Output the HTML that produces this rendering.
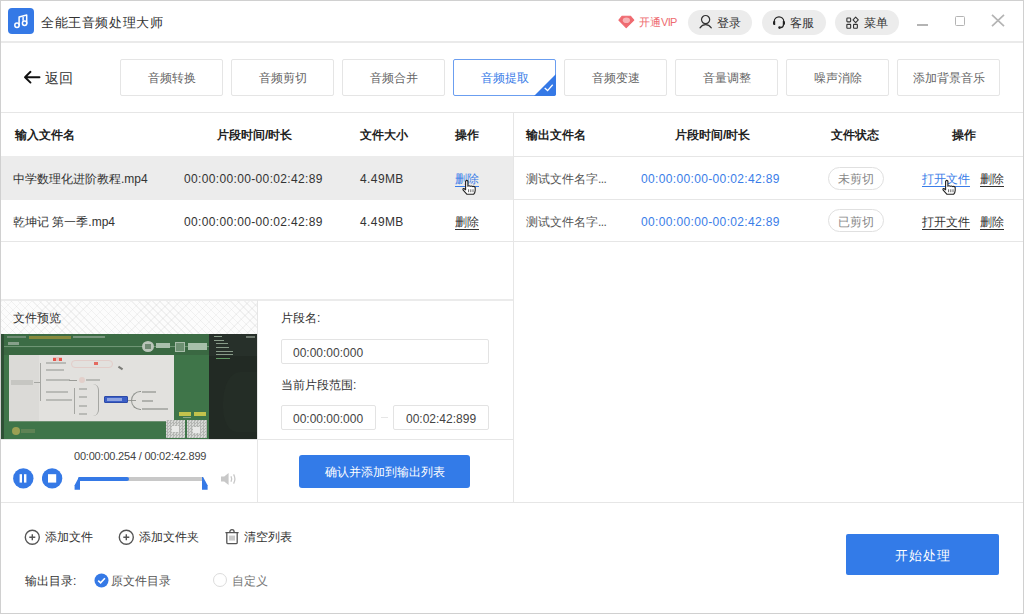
<!DOCTYPE html>
<html><head><meta charset="utf-8">
<style>
*{margin:0;padding:0;box-sizing:border-box}
html,body{width:1024px;height:614px;overflow:hidden;background:#fff}
body{font-family:"Liberation Sans",sans-serif;color:#333;font-size:12px;position:relative}
.a{position:absolute}
.win{left:0;top:0;width:1024px;height:614px;border:1px solid #d0d0d0}
.hl{height:1px;background:#e6e6e6}
.vl{width:1px;background:#e6e6e6}
.t{position:absolute;white-space:nowrap;line-height:1}
.pill{position:absolute;top:10px;height:25px;border-radius:13px;background:#ececec}
.tab{position:absolute;top:59px;width:103px;height:37px;border:1px solid #e5e5e5;border-radius:2px;color:#666;font-size:12px;text-align:center;line-height:36px}
.th{font-weight:bold;color:#222;font-size:12px}
.u{text-decoration:underline;text-underline-offset:3px}
.inp{position:absolute;height:25px;border:1px solid #e3e3e3;border-radius:2px;color:#444;font-size:12px;line-height:26px}
.dg{letter-spacing:0.35px}
</style></head><body>
<div class="a win"></div>

<!-- Title bar -->
<div class="a" style="left:8px;top:8px;width:26px;height:26px;border-radius:4px;background:#3579e6"></div>
<svg class="a" style="left:8px;top:8px" width="26" height="26" viewBox="0 0 26 26" fill="none" stroke="#fff" stroke-width="1.5" stroke-linecap="round" stroke-linejoin="round">
<circle cx="9" cy="17.3" r="2.2"/><circle cx="16.6" cy="15.3" r="2.2"/>
<path d="M11.1 17V8.9L18.7 7V15.2"/><path d="M15.1 9.6V12.3"/></svg>
<div class="t" style="left:41px;top:16px;font-size:13px;letter-spacing:0.6px;color:#333">全能王音频处理大师</div>
<div class="a" style="left:1px;top:41px;width:1022px;height:2px;background:#eaeaea"></div>

<svg class="a" style="left:618px;top:14px" width="17" height="15" viewBox="0 0 17 15">
<path d="M4.2 2.2H12.4L15.8 6L8.2 13.6L0.9 6Z" fill="#ef6a70" stroke="#ef6a70" stroke-width="1.1" stroke-linejoin="round"/>
<ellipse cx="8.4" cy="6.2" rx="3.6" ry="2.8" fill="#f7b3b6"/></svg>
<div class="t" style="left:639px;top:17px;font-size:11px;color:#ee6b70">开通<span style="letter-spacing:-0.7px">VIP</span></div>
<div class="pill" style="left:688px;width:64px"></div>
<svg class="a" style="left:699px;top:13px" width="14" height="16" viewBox="0 0 14 16" fill="none" stroke="#333" stroke-width="1.2">
<circle cx="6.6" cy="6.6" r="4.1"/><path d="M1 14.8C2.5 12.6 4.4 11.6 6.6 11.6C8.8 11.6 10.7 12.6 12.3 14.8" stroke-linecap="round"/></svg>
<div class="t" style="left:717px;top:17px;font-size:12px;color:#333">登录</div>
<div class="pill" style="left:762px;width:64px"></div>
<svg class="a" style="left:772px;top:14px" width="14" height="16" viewBox="0 0 14 16" fill="none" stroke="#222" stroke-width="1.15">
<path d="M2.2 9V7.6A4.8 4.8 0 0 1 11.8 7.6V9"/><path d="M1 8.2Q1 7 2.4 7H3.2V11H2.4Q1 11 1 9.8Z" fill="#222" stroke="none"/>
<path d="M13 8.2Q13 7 11.6 7H10.8V11H11.6Q13 11 13 9.8Z" fill="#222" stroke="none"/>
<path d="M11.6 10.6Q11.4 13.2 8.6 13.6"/><circle cx="7.6" cy="13.6" r="1.35" fill="#222" stroke="none"/></svg>
<div class="t" style="left:790px;top:17px;font-size:12px;color:#333">客服</div>
<div class="pill" style="left:835px;width:64px"></div>
<svg class="a" style="left:845px;top:16px" width="15" height="14" viewBox="0 0 15 14" fill="none" stroke="#333" stroke-width="1.1">
<rect x="1.85" y="1.95" width="3.8" height="3.9" rx="0.8"/><path d="M10.65 1.2L13.3 3.9L10.65 6.6L8 3.9Z" stroke-linejoin="round"/>
<rect x="1.85" y="8.35" width="3.8" height="3.9" rx="0.5"/><rect x="8.55" y="8.35" width="3.8" height="3.9" rx="0.5"/></svg>
<div class="t" style="left:864px;top:17px;font-size:12px;color:#333">菜单</div>
<div class="a" style="left:917px;top:24px;width:11px;height:2px;background:#b4b4b4"></div>
<div class="a" style="left:955px;top:15.5px;width:10px;height:10px;border:1.8px solid #b4b4b4;border-radius:1.5px"></div>
<svg class="a" style="left:991px;top:14px" width="14" height="13" viewBox="0 0 14 13" stroke="#b4b4b4" stroke-width="1.7"><path d="M1 0.8L13 12.2M13 0.8L1 12.2"/></svg>

<!-- Nav row -->
<svg class="a" style="left:23px;top:70px" width="18" height="14" viewBox="0 0 18 14" fill="none" stroke="#111" stroke-width="1.9" stroke-linecap="round" stroke-linejoin="round">
<path d="M2 7.2H16.5M7.5 1.8L2 7.2L7.5 12.6"/></svg>
<div class="t" style="left:45px;top:71px;font-size:14px;color:#333">返回</div>
<div class="tab" style="left:120px">音频转换</div>
<div class="tab" style="left:231px">音频剪切</div>
<div class="tab" style="left:342px">音频合并</div>
<div class="tab" style="left:453px;border-color:#6b9ef0;color:#3a7de8">音频提取</div>
<svg class="a" style="left:533px;top:74px" width="23" height="22" viewBox="0 0 23 22"><path d="M23 0V20Q23 22 21 22H1Z" fill="#3579e6"/>
<path d="M11.7 14L14.6 16.6L19.7 10.7" fill="none" stroke="#fff" stroke-width="1.3"/></svg>
<div class="tab" style="left:564px">音频变速</div>
<div class="tab" style="left:675px">音量调整</div>
<div class="tab" style="left:786px">噪声消除</div>
<div class="tab" style="left:897px">添加背景音乐</div>
<div class="a hl" style="left:1px;top:112px;width:1022px"></div>

<!-- Left table -->
<div class="a" style="left:1px;top:156px;width:512px;height:44px;background:#ececec"></div>
<div class="a hl" style="left:1px;top:241px;width:512px"></div>
<div class="a vl" style="left:513px;top:113px;height:389px"></div>
<div class="t th" style="left:15px;top:129px">输入文件名</div>
<div class="t th" style="left:217px;top:129px">片段时间/时长</div>
<div class="t th" style="left:360px;top:129px">文件大小</div>
<div class="t th" style="left:455px;top:129px">操作</div>

<div class="t" style="left:13px;top:173px">中学数理化进阶教程.mp4</div>
<div class="t dg" style="left:184px;top:173px">00:00:00:00-00:02:42:89</div>
<div class="t" style="left:360px;top:173px;letter-spacing:0.4px">4.49MB</div>
<div class="t u" style="left:455px;top:173px;color:#3a7de8">删除</div>
<svg class="a" style="left:462px;top:179px" width="15" height="16" viewBox="0 0 15 16">
<path d="M3.6 2.2Q4.7 0.6 5.9 2.2V7.2Q7.1 6.2 8.3 7.3Q9.5 6.5 10.7 7.6Q12.1 7 13.2 8.3V11.6Q13.2 13.6 11.6 15.3H5L1.2 11.1Q0.4 9.8 1.8 9.5L3.6 10.8Z" fill="#fff" stroke="#222" stroke-width="1.1" stroke-linejoin="round"/>
<path d="M6.6 10.3V13.2M8.8 10.3V13.2M11 10.3V13.2" stroke="#555" stroke-width="0.9"/></svg>
<div class="t" style="left:13px;top:216px">乾坤记 第一季.mp4</div>
<div class="t dg" style="left:184px;top:216px">00:00:00:00-00:02:42:89</div>
<div class="t" style="left:360px;top:216px;letter-spacing:0.4px">4.49MB</div>
<div class="t u" style="left:455px;top:216px">删除</div>

<!-- Right table -->
<div class="a hl" style="left:514px;top:156px;width:509px"></div>
<div class="a hl" style="left:514px;top:199px;width:509px"></div>
<div class="a hl" style="left:514px;top:241px;width:509px"></div>
<div class="t th" style="left:526px;top:129px">输出文件名</div>
<div class="t th" style="left:675px;top:129px">片段时间/时长</div>
<div class="t th" style="left:831px;top:129px">文件状态</div>
<div class="t th" style="left:952px;top:129px">操作</div>

<div class="t" style="left:526px;top:173px;color:#555">测试文件名字<span style="letter-spacing:-0.6px">...</span></div>
<div class="t dg" style="left:641px;top:173px;color:#3a7de8">00:00:00:00-00:02:42:89</div>
<div class="a" style="left:828px;top:167px;width:56px;height:23px;border:1px solid #e0e0e0;border-radius:12px"></div>
<div class="t" style="left:838px;top:173px;color:#888">未剪切</div>
<div class="t u" style="left:922px;top:173px;color:#3a7de8">打开文件</div>
<div class="t u" style="left:980px;top:173px">删除</div>
<svg class="a" style="left:942px;top:179px" width="15" height="16" viewBox="0 0 15 16">
<path d="M3.6 2.2Q4.7 0.6 5.9 2.2V7.2Q7.1 6.2 8.3 7.3Q9.5 6.5 10.7 7.6Q12.1 7 13.2 8.3V11.6Q13.2 13.6 11.6 15.3H5L1.2 11.1Q0.4 9.8 1.8 9.5L3.6 10.8Z" fill="#fff" stroke="#222" stroke-width="1.1" stroke-linejoin="round"/>
<path d="M6.6 10.3V13.2M8.8 10.3V13.2M11 10.3V13.2" stroke="#555" stroke-width="0.9"/></svg>
<div class="t" style="left:526px;top:216px;color:#555">测试文件名字<span style="letter-spacing:-0.6px">...</span></div>
<div class="t dg" style="left:641px;top:216px;color:#3a7de8">00:00:00:00-00:02:42:89</div>
<div class="a" style="left:828px;top:209px;width:56px;height:23px;border:1px solid #e0e0e0;border-radius:12px"></div>
<div class="t" style="left:838px;top:216px;color:#888">已剪切</div>
<div class="t u" style="left:922px;top:216px">打开文件</div>
<div class="t u" style="left:980px;top:216px">删除</div>

<!-- Preview section -->
<div class="a" style="left:1px;top:299px;width:512px;height:2px;background:#ebebeb"></div>
<div class="a" style="left:1px;top:301px;width:256px;height:33px;background-color:#fcfcfc;background-image:repeating-linear-gradient(45deg,rgba(200,200,200,.22) 0 1px,transparent 1px 5px),repeating-linear-gradient(-45deg,rgba(200,200,200,.18) 0 1px,transparent 1px 7px)"></div>
<div class="t" style="left:13px;top:312px">文件预览</div>
<div class="a" style="left:1px;top:334px;width:256px;height:105px;background:#3f7549;overflow:hidden">
 <div class="a" style="left:0px;top:0px;width:208px;height:21px;background:#3c6c45"></div>
 <div class="a" style="left:0px;top:0px;width:3px;height:105px;background:#2e4f35"></div>
 <div class="a" style="left:6px;top:2px;width:19px;height:2px;background:#6f8c73"></div>
 <div class="a" style="left:28px;top:2px;width:42px;height:3px;background:#87893c"></div>
 <div class="a" style="left:72px;top:2px;width:32px;height:2px;background:#7a967e"></div>
 <div class="a" style="left:7px;top:8px;width:11px;height:3px;background:#86a08a"></div>
 <div class="a" style="left:3px;top:12px;width:205px;height:1px;background:#6f9574"></div>
 <div class="a" style="left:3px;top:14px;width:205px;height:7px;background:#3a6842"></div>
 <div class="a" style="left:141px;top:7px;width:12px;height:11px;background:#b9c5b9;border-radius:50%"></div>
 <div class="a" style="left:144px;top:10px;width:6px;height:5px;background:#6f8a73"></div>
 <div class="a" style="left:155px;top:9px;width:14px;height:5px;background:#a9bfac"></div>
 <div class="a" style="left:174px;top:8px;width:10px;height:10px;background:#6d9072;border:1px solid #a7bca9"></div>
 <div class="a" style="left:187px;top:9px;width:19px;height:7px;background:#a7c0aa"></div>
 <div class="a" style="left:8px;top:21px;width:165px;height:66px;background:#e2e1de"></div>
 <div class="a" style="left:8px;top:21px;width:30px;height:66px;background:#dbdad7"></div>
 <div class="a" style="left:10px;top:46px;width:22px;height:5px;background:#c6c6c2"></div>
 <div class="a" style="left:33px;top:48px;width:6px;height:1px;background:#a5a6a2"></div>
 <div class="a" style="left:39px;top:29px;width:1px;height:38px;background:#a5a6a2"></div>
 <div class="a" style="left:45px;top:28px;width:20px;height:2px;background:#b9bab6"></div>
 <div class="a" style="left:45px;top:35px;width:18px;height:2px;background:#b9bab6"></div>
 <div class="a" style="left:45px;top:45px;width:24px;height:2px;background:#b9bab6"></div>
 <div class="a" style="left:45px;top:57px;width:22px;height:2px;background:#b9bab6"></div>
 <div class="a" style="left:45px;top:65px;width:26px;height:2px;background:#b9bab6"></div>
 <div class="a" style="left:52px;top:23px;width:9px;height:4px;background:#e4c2bd"></div>
 <div class="a" style="left:52px;top:24px;width:3px;height:3px;background:#e8554a"></div>
 <div class="a" style="left:58px;top:24px;width:3px;height:3px;background:#e8554a"></div>
 <div class="a" style="left:70px;top:26px;width:42px;height:8px;background:transparent;border:1px solid #e2cdc9;border-radius:6px"></div>
 <div class="a" style="left:93px;top:28px;width:4px;height:3px;background:#e46a60"></div>
 <div class="a" style="left:68px;top:46px;width:8px;height:1px;background:#9a9b97"></div>
 <div class="a" style="left:78px;top:43px;width:6px;height:6px;background:#e2cfca;border-radius:50%"></div>
 <div class="a" style="left:85px;top:45px;width:14px;height:2px;background:#b9bab6"></div>
 <div class="a" style="left:73px;top:54px;width:1px;height:26px;background:#a5a6a2"></div>
 <div class="a" style="left:78px;top:54px;width:8px;height:2px;background:#b9bab6"></div>
 <div class="a" style="left:78px;top:62px;width:8px;height:2px;background:#b9bab6"></div>
 <div class="a" style="left:78px;top:71px;width:8px;height:2px;background:#b9bab6"></div>
 <div class="a" style="left:78px;top:79px;width:8px;height:2px;background:#b9bab6"></div>
 <div class="a" style="left:92px;top:50px;width:6px;height:32px;background:transparent;border-right:1px solid #a5a6a2;border-radius:0 8px 8px 0"></div>
 <div class="a" style="left:117px;top:33px;width:5px;height:2px;background:#7b7c78;transform:rotate(35deg)"></div>
 <div class="a" style="left:103px;top:62px;width:24px;height:7px;background:#3b5ec6;border:1px solid #2c4aa8;border-radius:1px"></div>
 <div class="a" style="left:106px;top:64px;width:15px;height:3px;background:#8ea3e0"></div>
 <div class="a" style="left:127px;top:66px;width:8px;height:1px;background:#9a9b97"></div>
 <div class="a" style="left:130px;top:57px;width:10px;height:19px;background:transparent;border:1px solid #8f928e;border-right:none;border-radius:10px 0 0 10px"></div>
 <div class="a" style="left:141px;top:57px;width:14px;height:2px;background:#b0b1ad"></div>
 <div class="a" style="left:141px;top:66px;width:11px;height:2px;background:#b0b1ad"></div>
 <div class="a" style="left:141px;top:74px;width:26px;height:2px;background:#b0b1ad"></div>
 <div class="a" style="left:8px;top:87px;width:165px;height:1px;background:#6c9070"></div>
 <div class="a" style="left:11px;top:93px;width:8px;height:8px;background:#9b9f53;border-radius:50%"></div>
 <div class="a" style="left:20px;top:95px;width:14px;height:4px;background:#5e8355"></div>
 <div class="a" style="left:178px;top:78px;width:12px;height:4px;background:#c2c24c"></div>
 <div class="a" style="left:193px;top:78px;width:12px;height:4px;background:#c2c24c"></div>
 <div class="a" style="left:182px;top:83px;width:8px;height:1px;background:#86a58a"></div>
 <div class="a" style="left:165px;top:86px;width:19px;height:18px;background:#d6d8d5;background-color:#d6d8d5;background-image:repeating-conic-gradient(#b4b6b3 0 25%,transparent 0 50%);background-size:3px 3px"></div>
 <div class="a" style="left:186px;top:86px;width:20px;height:18px;background:#d6d8d5;background-color:#d6d8d5;background-image:repeating-conic-gradient(#b4b6b3 0 25%,transparent 0 50%);background-size:3px 3px"></div>
 <div class="a" style="left:171px;top:92px;width:7px;height:6px;background:#e8e9e7"></div>
 <div class="a" style="left:192px;top:93px;width:7px;height:6px;background:#e8e9e7"></div>
 <div class="a" style="left:208px;top:0px;width:48px;height:105px;background:#27302a"></div>
 <div class="a" style="left:208px;top:22px;width:48px;height:83px;background:#222a24"></div>
 <div class="a" style="left:222px;top:38px;width:34px;height:60px;background:#242d26;border-radius:50% 0 0 40%"></div>
 <div class="a" style="left:213px;top:2px;width:8px;height:1px;background:#8fa38f"></div>
 <div class="a" style="left:245px;top:2px;width:9px;height:2px;background:#6f7a70"></div>
 <div class="a" style="left:213px;top:6px;width:10px;height:1px;background:#8a9e8b"></div>
 <div class="a" style="left:215px;top:9px;width:12px;height:1px;background:#879a88"></div>
 <div class="a" style="left:215px;top:13px;width:13px;height:1px;background:#879a88"></div>
 <div class="a" style="left:215px;top:17px;width:17px;height:1px;background:#879a88"></div>
 <div class="a" style="left:215px;top:20px;width:17px;height:1px;background:#879a88"></div>
 <div class="a" style="left:215px;top:24px;width:14px;height:1px;background:#5f9a62"></div>
</div>
<div class="a vl" style="left:257px;top:300px;height:202px"></div>
<div class="a hl" style="left:1px;top:439px;width:512px"></div>

<div class="t" style="left:281px;top:312px">片段名:</div>
<div class="inp" style="left:281px;top:339px;width:208px;padding-left:11px">00:00:00:000</div>
<div class="t" style="left:281px;top:379px">当前片段范围:</div>
<div class="inp" style="left:281px;top:405px;width:95px;padding-left:11px">00:00:00:000</div>
<div class="a hl" style="left:381px;top:417px;width:7px"></div>
<div class="inp" style="left:393px;top:405px;width:96px;padding-left:12px">00:02:42:899</div>

<div class="t" style="left:74px;top:451px;font-size:11px;color:#444;letter-spacing:-0.2px">00:00:00.254 / 00:02:42.899</div>
<svg class="a" style="left:13px;top:468px" width="21" height="21" viewBox="0 0 21 21"><circle cx="10.3" cy="10.4" r="10.2" fill="#3579e6"/>
<rect x="6.6" y="6.2" width="2.4" height="8.4" fill="#fff"/><rect x="11" y="6.2" width="2.4" height="8.4" fill="#fff"/></svg>
<svg class="a" style="left:42px;top:468px" width="21" height="21" viewBox="0 0 21 21"><circle cx="10.1" cy="10.4" r="10.2" fill="#3579e6"/>
<rect x="6" y="6.2" width="8.2" height="8.4" fill="#fff"/></svg>
<div class="a" style="left:78px;top:477px;width:126px;height:4px;border-radius:2px;background:#c8c8c8"></div>
<div class="a" style="left:78px;top:477px;width:51px;height:4px;border-radius:2px;background:#3579e6"></div>
<svg class="a" style="left:74px;top:476px" width="134" height="14" viewBox="0 0 134 14" fill="#3579e6">
<path d="M5 1L6 1V13.8H0.6V9.2Z"/><path d="M128 1L129 1L133.6 9.2V13.8H128Z"/></svg>
<svg class="a" style="left:220px;top:472px" width="18" height="14" viewBox="0 0 18 14">
<path d="M1 4.4H4.2L8.6 1V13L4.2 9.6H1Z" fill="#c8c8c8"/>
<path d="M11 4.2Q12.4 7 11 9.8M13.6 2.4Q16.2 7 13.6 11.6" fill="none" stroke="#c8c8c8" stroke-width="1.3"/></svg>

<div class="a" style="left:299px;top:455px;width:171px;height:33px;border-radius:3px;background:#337be8"></div>
<div class="t" style="left:325px;top:466px;color:#fff">确认并添加到输出列表</div>

<!-- Bottom -->
<div class="a hl" style="left:1px;top:502px;width:1022px"></div>
<svg class="a" style="left:24px;top:529px" width="17" height="17" viewBox="0 0 17 17" fill="none" stroke="#555" stroke-width="1.4">
<circle cx="8.3" cy="8.2" r="7"/><path d="M8.3 5.2V11.2M5.3 8.2H11.3"/></svg>
<div class="t" style="left:45px;top:531px;color:#333">添加文件</div>
<svg class="a" style="left:118px;top:529px" width="17" height="17" viewBox="0 0 17 17" fill="none" stroke="#555" stroke-width="1.4">
<circle cx="8.3" cy="8.2" r="7"/><path d="M8.3 5.2V11.2M5.3 8.2H11.3"/></svg>
<div class="t" style="left:139px;top:531px;color:#333">添加文件夹</div>
<svg class="a" style="left:224px;top:528px" width="16" height="17" viewBox="0 0 16 17" fill="none" stroke="#555" stroke-width="1.3">
<path d="M1.4 4.6H14.6M5.8 4.4Q5.8 1.6 8 1.6Q10.2 1.6 10.2 4.4"/><path d="M2.8 4.8V14.4Q2.8 15.6 4 15.6H12Q13.2 15.6 13.2 14.4V4.8"/>
<path d="M6 7.6V12.6M8 7.6V12.6M10 7.6V12.6" stroke-width="0.9" stroke="#888"/></svg>
<div class="t" style="left:244px;top:531px;color:#333">清空列表</div>
<div class="t" style="left:25px;top:575px;color:#333">输出目录:</div>
<svg class="a" style="left:94px;top:573px" width="15" height="15" viewBox="0 0 15 15"><circle cx="7.5" cy="7.5" r="7" fill="#3579e6"/>
<path d="M4.2 7.6L6.6 9.9L10.9 5.3" fill="none" stroke="#fff" stroke-width="1.6"/></svg>
<div class="t" style="left:111px;top:575px;color:#555">原文件目录</div>
<div class="a" style="left:213px;top:573px;width:14px;height:14px;border-radius:50%;border:1px solid #dcdcdc"></div>
<div class="t" style="left:232px;top:575px;color:#777">自定义</div>
<div class="a" style="left:846px;top:534px;width:153px;height:41px;border-radius:2px;background:#337be8"></div>
<div class="t" style="left:895px;top:549px;font-size:13px;letter-spacing:1px;color:#fff">开始处理</div>
</body></html>
